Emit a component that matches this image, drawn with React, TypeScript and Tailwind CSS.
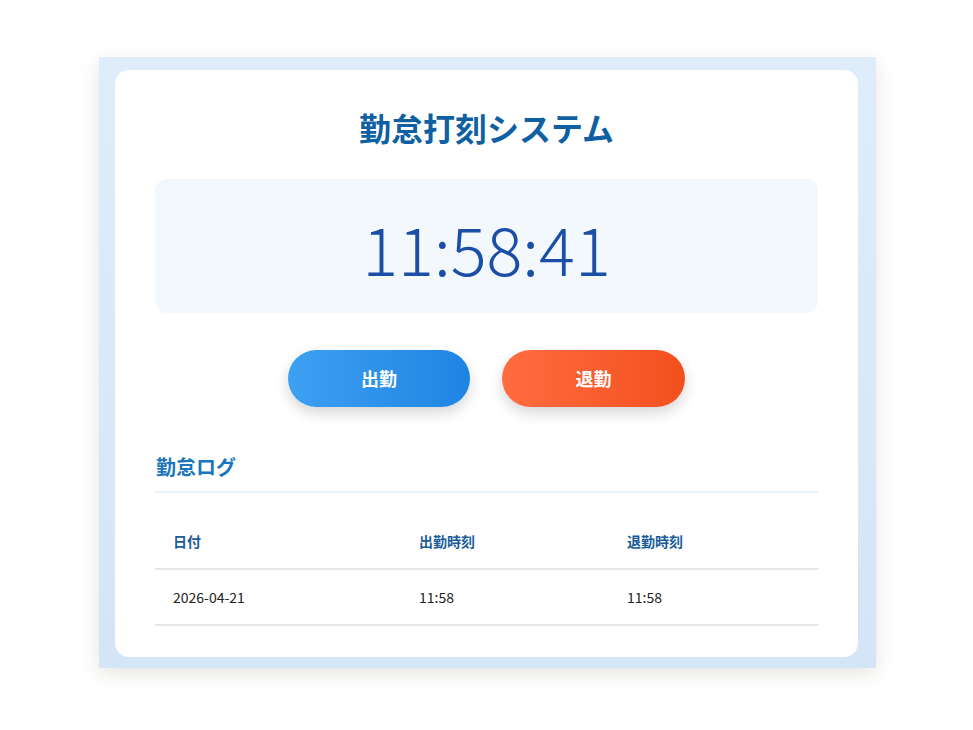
import React from 'react';

const logs = [{ date: '2026-04-21', in: '11:58', out: '11:58' }];

export default function App() {
  return (
    <div
      className="min-h-screen w-full bg-white pt-[57px]"
      style={{ fontFamily: '"Noto Sans CJK JP", "Noto Sans", sans-serif' }}
    >
      {/* 外枠 */}
      <div className="ml-[99px] w-[777px] bg-gradient-to-b from-[#dfedfa] to-[#d3e5f6] pt-[13px] pb-[11px] pl-[16px] pr-[18px] shadow-[0_6px_18px_rgba(120,110,90,0.18)]">
        <div className="rounded-[14px] bg-white px-[40px] pt-[33px] pb-[31px]">
          {/* タイトル */}
          <h1 className="text-center text-[32px] font-bold leading-[48px] text-[#0f5fa3]">
            勤怠打刻システム
          </h1>

          {/* 時計 */}
          <div className="mt-[28px] flex h-[134px] items-center justify-center rounded-[12px] bg-[#f3f8fd]">
            <span className="text-[67px] font-light leading-none text-[#1b4ea6]">
              11:58:41
            </span>
          </div>

          {/* ボタン */}
          <div className="mt-[37px] flex justify-center gap-[32px]">
            <button className="h-[57px] w-[182px] rounded-full bg-gradient-to-r from-[#3ea0f2] to-[#1e84e3] text-[18px] font-bold text-white shadow-[0_6px_14px_rgba(0,0,0,0.16)]">
              出勤
            </button>
            <button className="h-[57px] w-[183px] rounded-full bg-gradient-to-r from-[#ff6c3f] to-[#f34f1d] text-[18px] font-bold text-white shadow-[0_6px_14px_rgba(0,0,0,0.16)]">
              退勤
            </button>
          </div>

          {/* 勤怠ログ */}
          <h2 className="mt-[45px] border-b-2 border-[#e6f1fb] pb-[9px] pl-[1px] text-[20px] font-bold leading-[30px] text-[#1b76bd]">
            勤怠ログ
          </h2>

          <table className="mt-[20px] w-full border-collapse text-left">
            <thead>
              <tr className="h-[56px] border-b-2 border-[#e6e6e6]">
                <th className="w-[246px] pl-[18px] pt-[2px] text-[14px] font-bold text-[#1a5c99]">日付</th>
                <th className="w-[208px] pl-[18px] pt-[2px] text-[14px] font-bold text-[#1a5c99]">出勤時刻</th>
                <th className="pl-[18px] pt-[2px] text-[14px] font-bold text-[#1a5c99]">退勤時刻</th>
              </tr>
            </thead>
            <tbody>
              {logs.map((log) => (
                <tr key={log.date} className="h-[56px] border-b-2 border-[#e6e6e6]">
                  <td className="pl-[18px] text-[14px] text-[#222]">{log.date}</td>
                  <td className="pl-[18px] text-[14px] text-[#222]">{log.in}</td>
                  <td className="pl-[18px] text-[14px] text-[#222]">{log.out}</td>
                </tr>
              ))}
            </tbody>
          </table>
        </div>
      </div>
    </div>
  );
}
